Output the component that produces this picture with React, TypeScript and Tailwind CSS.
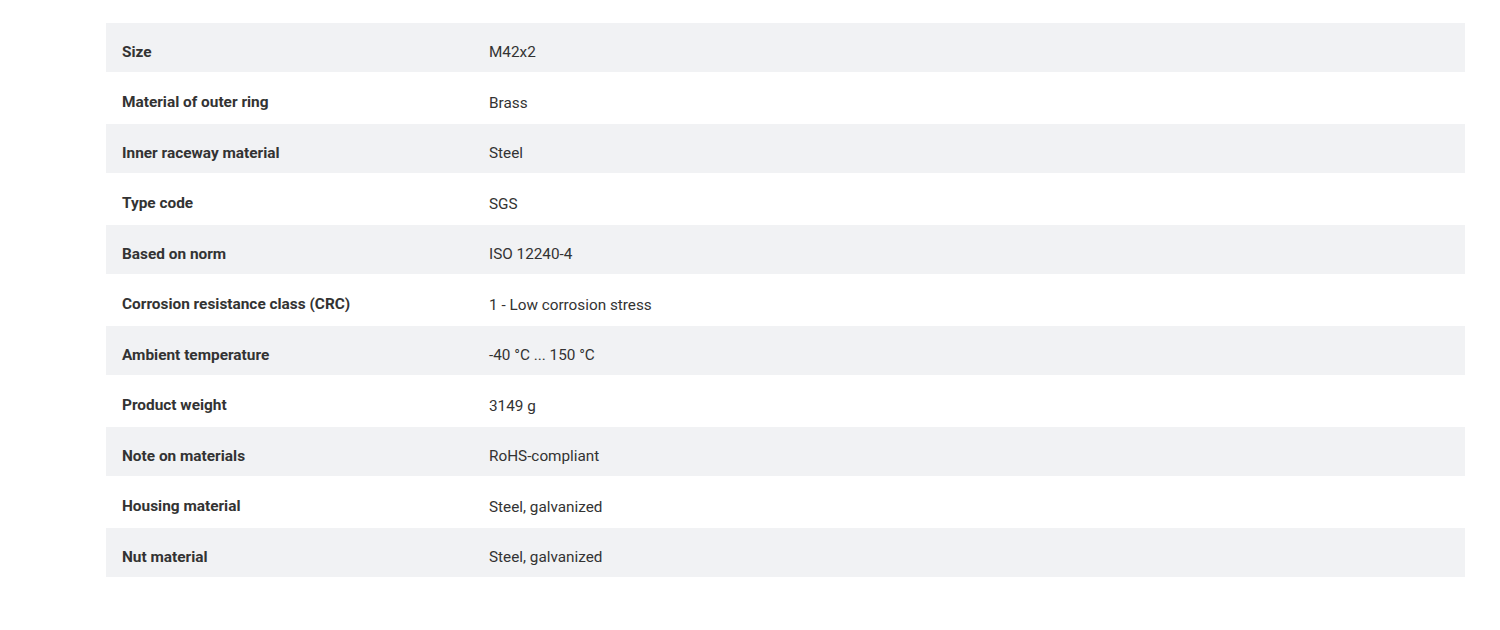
const rows: [string, string][] = [
  ["Size", "M42x2"],
  ["Material of outer ring", "Brass"],
  ["Inner raceway material", "Steel"],
  ["Type code", "SGS"],
  ["Based on norm", "ISO 12240-4"],
  ["Corrosion resistance class (CRC)", "1 - Low corrosion stress"],
  ["Ambient temperature", "-40 °C ... 150 °C"],
  ["Product weight", "3149 g"],
  ["Note on materials", "RoHS-compliant"],
  ["Housing material", "Steel, galvanized"],
  ["Nut material", "Steel, galvanized"],
];

export default function App() {
  return (
    <div className="w-[1500px] h-[630px] bg-white pt-[23px] pl-[106px]" style={{ fontFamily: "Roboto, 'Noto Sans', sans-serif" }}>
      <div className="w-[1359px] flex flex-col text-[#333333]">
        {rows.map(([k, v], i) => (
          <div
            key={k}
            className={
              i % 2 === 0
                ? "flex items-center pt-[10px] h-[49px] bg-[#f1f2f4]"
                : "flex items-center pt-[10px] h-[52px] bg-white"
            }
          >
            <div className="w-[383px] pl-4 text-[15.4px] font-bold">{k}</div>
            <div className="text-[15.3px]">{v}</div>
          </div>
        ))}
      </div>
    </div>
  );
}
